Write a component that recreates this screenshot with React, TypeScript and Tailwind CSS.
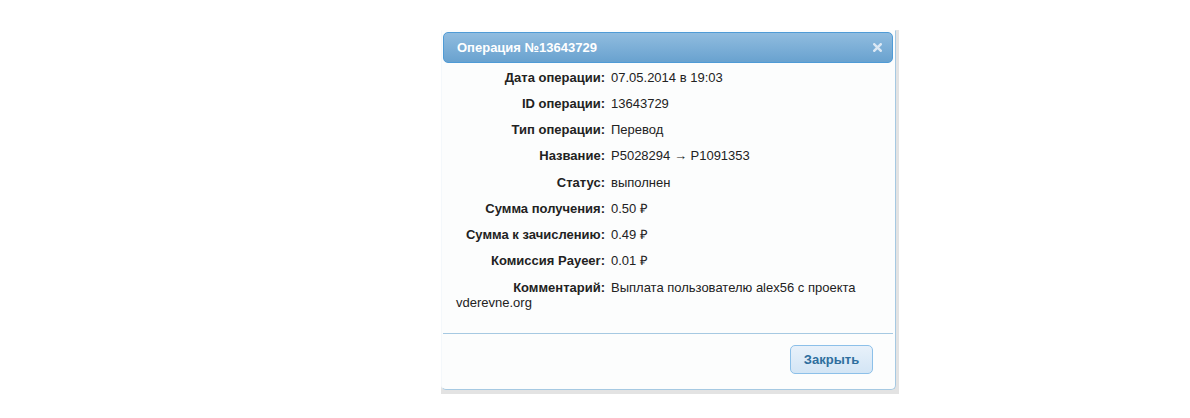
const rows: { label: string; value: string; more?: string }[] = [
  { label: 'Дата операции:', value: '07.05.2014 в 19:03' },
  { label: 'ID операции:', value: '13643729' },
  { label: 'Тип операции:', value: 'Перевод' },
  { label: 'Название:', value: 'P5028294 → P1091353' },
  { label: 'Статус:', value: 'выполнен' },
  { label: 'Сумма получения:', value: '0.50 ₽' },
  { label: 'Сумма к зачислению:', value: '0.49 ₽' },
  { label: 'Комиссия Payeer:', value: '0.01 ₽' },
  { label: 'Комментарий:', value: 'Выплата пользователю alex56 с проекта', more: 'vderevne.org' },
]

function CloseIcon() {
  return (
    <svg width="9" height="9" viewBox="0 0 9 9" className="block">
      <path d="M1.3 1.3 L7.7 7.7 M7.7 1.3 L1.3 7.7" stroke="#dbe8f4" strokeWidth="2.5" strokeLinecap="square" />
    </svg>
  )
}

export default function App() {
  return (
    <div className="w-[1190px] h-[418px] bg-white font-['Liberation_Sans',Arial,sans-serif] text-[13px] text-[#222]">
      <div className="pt-[30px] pl-[441px]">
        {/* page behind the dialog */}
        <div className="w-[458px] bg-[#e3e3e3] pr-[3px] pb-[4px]">
          <div className="w-[455px] bg-[#fcfdfd] border border-[#a6c9e2] border-l-[#f4f8fb] border-t-[#fcfdfd] rounded-b-[5px] pl-[1px] pr-[2px] pt-[1px]">
            <div className="h-[31px] rounded-[5px] border border-[#4f9bd6] bg-gradient-to-b from-[#90bcdf] to-[#69a2cf] flex items-center justify-between pl-[13px] pr-[10px]">
              <span className="font-bold text-white">Операция №13643729</span>
              <CloseIcon />
            </div>

            <div className="px-[13px] pt-[6.5px] pb-[12.25px]">
              {rows.map((r) => (
                <div key={r.label} className="leading-[15px] pb-[11.25px]">
                  <div className="flex">
                    <span className="w-[149px] shrink-0 text-right font-bold mr-[6px]">{r.label}</span>
                    <span>{r.value}</span>
                  </div>
                  {r.more && <div>{r.more}</div>}
                </div>
              ))}
            </div>

            <div className="border-t border-[#a6c9e2] flex justify-end pt-[11px] pb-[15px] pr-[20px]">
              <button className="w-[83px] h-[29px] rounded-[5px] border border-[#8cc0e9] bg-gradient-to-b from-[#e8f1fa] to-[#d3e5f5] font-bold text-[#2e6e9e] text-[13px]">
                Закрыть
              </button>
            </div>
          </div>
        </div>
      </div>
    </div>
  )
}
